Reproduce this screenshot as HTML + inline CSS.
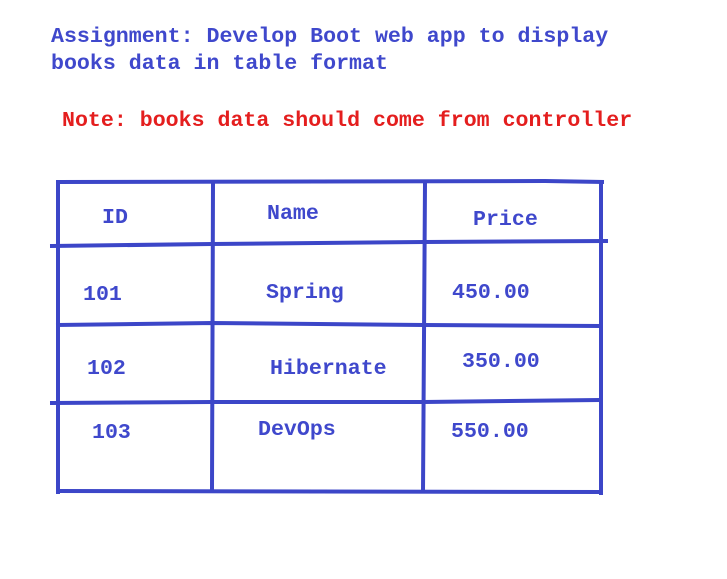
<!DOCTYPE html>
<html><head><meta charset="utf-8"><style>
html,body{margin:0;padding:0;background:#fff;width:727px;height:579px;overflow:hidden}
svg text{font-family:"Liberation Mono",monospace;font-weight:bold;font-size:21.6px}
</style></head><body>
<svg width="727" height="579" viewBox="0 0 727 579" xmlns="http://www.w3.org/2000/svg">
<g fill="#3f48cc" dominant-baseline="central">
<text x="51" y="37">Assignment: Develop Boot web app to display</text>
<text x="51" y="64">books data in table format</text>
</g>
<text x="62" y="121" fill="#e41e1e" dominant-baseline="central">Note: books data should come from controller</text>
<g stroke="#3c46c8" stroke-width="4" fill="none" stroke-linecap="square">
<path d="M58 182 L545 181 L602 182"/>
<path d="M58 182 L58 492"/>
<path d="M58 491 L601 492"/>
<path d="M601 182 L601 493"/>
<path d="M213 183 L212 490"/>
<path d="M425 183 L423 491"/>
<path d="M52 246 L212 244 L424 242 L606 241"/>
<path d="M58 325 L212 323 L424 325 L600 326"/>
<path d="M52 403 L212 402 L424 402 L598 400"/>
</g>
<g fill="#3f48cc" dominant-baseline="central">
<text x="102" y="218">ID</text>
<text x="267" y="214">Name</text>
<text x="473" y="220">Price</text>
<text x="83" y="295">101</text>
<text x="266" y="293">Spring</text>
<text x="452" y="293">450.00</text>
<text x="87" y="369">102</text>
<text x="270" y="369">Hibernate</text>
<text x="462" y="362">350.00</text>
<text x="92" y="433">103</text>
<text x="258" y="430">DevOps</text>
<text x="451" y="432">550.00</text>
</g>
</svg>
</body></html>
